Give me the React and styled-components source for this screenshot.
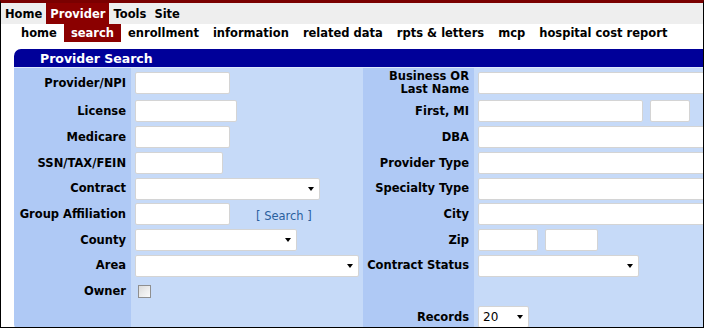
import React from "react";
import styled, { createGlobalStyle } from "styled-components";

const GlobalStyle = createGlobalStyle`
  html, body {
    margin: 0;
    padding: 0;
    background: #fff;
  }
  body {
    font-family: "DejaVu Sans", Verdana, sans-serif;
    font-size: 12px;
  }
`;

const Frame = styled.div`
  width: 704px;
  height: 328px;
  box-sizing: border-box;
  border: 1px solid #000;
  border-top: 3px solid #7a0000;
  overflow: hidden;
  background: #fff;
`;

const TopMenu = styled.div`
  display: flex;
  height: 21px;
  background: #eeeeee;
`;

const TopItem = styled.div`
  display: flex;
  align-items: center;
  padding: 0 4px;
  font-weight: bold;
  font-size: 11.5px;
  color: ${(p) => (p.$active ? "#fff" : "#000")};
  background: ${(p) => (p.$active ? "#8b0000" : "transparent")};
`;

const SubMenu = styled.div`
  display: flex;
  height: 18px;
  padding-left: 13px;
  background: #fff;
`;

const SubItem = styled.div`
  display: flex;
  align-items: center;
  padding: 0 7px;
  font-weight: bold;
  font-size: 11.5px;
  white-space: nowrap;
  color: ${(p) => (p.$active ? "#fff" : "#000")};
  background: ${(p) => (p.$active ? "#8b0000" : "transparent")};
`;

const Panel = styled.div`
  margin: 7px 0 0 13px;
  width: 760px;
  border-radius: 7px 0 0 6px;
  overflow: hidden;
`;

const PanelHeader = styled.div`
  height: 18px;
  display: flex;
  align-items: center;
  padding-left: 26px;
  background: #000099;
  color: #fff;
  font-weight: bold;
  font-size: 12.5px;
  border-bottom: 1px solid #dde8fb;
`;

const Form = styled.div`
  display: grid;
  grid-template-columns: 117px 232px 111px 1fr;
  grid-template-rows: 30px 26px 26px 26px 25px 26px 26px 25px 26px 26px;
`;

const Label = styled.div`
  background: #afc9f5;
  display: flex;
  align-items: center;
  justify-content: flex-end;
  padding-right: 5px;
  font-weight: bold;
  font-size: 11.5px;
  text-align: right;
  line-height: 13px;
  white-space: nowrap;
  color: #000;
`;

const Field = styled.div`
  background: #c6daf8;
  display: flex;
  align-items: center;
  gap: ${(p) => p.$gap || 7}px;
  padding-left: 4px;
`;

const TextInput = styled.input`
  box-sizing: border-box;
  width: ${(p) => p.$w}px;
  height: 22px;
  border: 1px solid #d4d4d4;
  border-radius: 2px;
  background: #fff;
  margin: 0;
  padding: 0 3px;
  font-family: inherit;
  font-size: 12px;
`;

const SelectBox = styled.div`
  position: relative;
  box-sizing: border-box;
  width: ${(p) => p.$w}px;
  height: 22px;
  border: 1px solid #d4d4d4;
  border-radius: 2px;
  background: #fff;
  display: flex;
  align-items: center;
  padding-left: 4px;
  font-size: 12px;
  color: #000;

  &::after {
    content: "";
    position: absolute;
    right: 5px;
    top: 8px;
    border-left: 3.5px solid transparent;
    border-right: 3.5px solid transparent;
    border-top: 4px solid #000;
  }
`;

const SearchLink = styled.a`
  margin-left: 19px;
  color: #2a5f9e;
  font-size: 11.5px;
  text-decoration: none;
  margin-top: 3px;
`;

const Check = styled.span`
  display: inline-block;
  box-sizing: border-box;
  width: 13px;
  height: 13px;
  margin-left: 3px;
  border: 1px solid #8f8f8f;
  background: linear-gradient(135deg, #dcdcdc, #fbfbfb);
`;

const Empty = styled.div`
  background: ${(p) => (p.$label ? "#afc9f5" : "#c6daf8")};
`;

const topItems = ["Home", "Provider", "Tools", "Site"];
const subItems = [
  "home",
  "search",
  "enrollment",
  "information",
  "related data",
  "rpts & letters",
  "mcp",
  "hospital cost report",
];

export default function App() {
  return (
    <>
      <GlobalStyle />
      <Frame>
        <TopMenu>
          {topItems.map((t) => (
            <TopItem key={t} $active={t === "Provider"}>
              {t}
            </TopItem>
          ))}
        </TopMenu>
        <SubMenu>
          {subItems.map((t) => (
            <SubItem key={t} $active={t === "search"}>
              {t}
            </SubItem>
          ))}
        </SubMenu>
        <Panel>
          <PanelHeader>Provider Search</PanelHeader>
          <Form>
            <Label>Provider/NPI</Label>
            <Field>
              <TextInput $w={95} />
            </Field>
            <Label>
              Business OR
              <br />
              Last Name
            </Label>
            <Field>
              <TextInput $w={240} />
            </Field>

            <Label>License</Label>
            <Field>
              <TextInput $w={102} />
            </Field>
            <Label>First, MI</Label>
            <Field>
              <TextInput $w={165} />
              <TextInput $w={40} />
            </Field>

            <Label>Medicare</Label>
            <Field>
              <TextInput $w={95} />
            </Field>
            <Label>DBA</Label>
            <Field>
              <TextInput $w={240} />
            </Field>

            <Label>SSN/TAX/FEIN</Label>
            <Field>
              <TextInput $w={88} />
            </Field>
            <Label>Provider Type</Label>
            <Field>
              <TextInput $w={240} />
            </Field>

            <Label>Contract</Label>
            <Field>
              <SelectBox $w={185} />
            </Field>
            <Label>Specialty Type</Label>
            <Field>
              <TextInput $w={240} />
            </Field>

            <Label>Group Affiliation</Label>
            <Field>
              <TextInput $w={95} />
              <SearchLink href="#">[ Search ]</SearchLink>
            </Field>
            <Label>City</Label>
            <Field>
              <TextInput $w={240} />
            </Field>

            <Label>County</Label>
            <Field>
              <SelectBox $w={162} />
            </Field>
            <Label>Zip</Label>
            <Field>
              <TextInput $w={60} />
              <TextInput $w={53} />
            </Field>

            <Label>Area</Label>
            <Field>
              <SelectBox $w={224} />
            </Field>
            <Label>Contract Status</Label>
            <Field>
              <SelectBox $w={161} />
            </Field>

            <Label>Owner</Label>
            <Field>
              <Check />
            </Field>
            <Empty $label />
            <Empty />

            <Empty $label />
            <Empty />
            <Label>Records</Label>
            <Field>
              <SelectBox $w={51}>20</SelectBox>
            </Field>
          </Form>
        </Panel>
      </Frame>
    </>
  );
}
